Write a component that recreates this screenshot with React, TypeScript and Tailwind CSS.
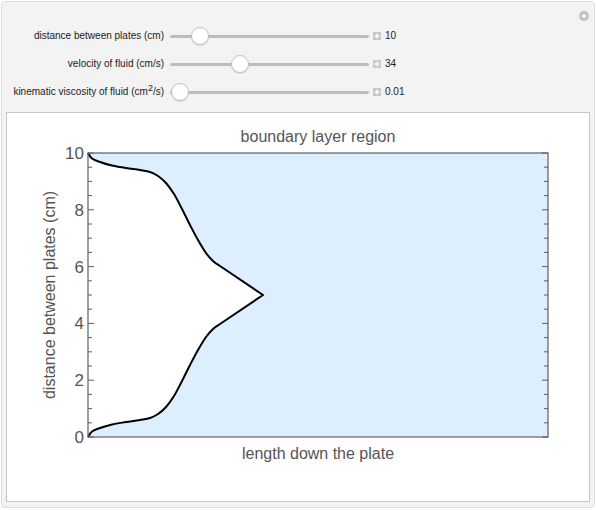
import React from "react";

type Pt = [number, number];

// catmull-rom through the points, turned into cubic beziers
function smooth(pts: Pt[]): string {
  let d = `M${pts[0][0]},${pts[0][1]}`;
  for (let i = 0; i < pts.length - 1; i++) {
    const p0 = pts[i - 1] || pts[i];
    const p1 = pts[i];
    const p2 = pts[i + 1];
    const p3 = pts[i + 2] || p2;
    const c1x = p1[0] + (p2[0] - p0[0]) / 6;
    const c1y = p1[1] + (p2[1] - p0[1]) / 6;
    const c2x = p2[0] - (p3[0] - p1[0]) / 6;
    const c2y = p2[1] - (p3[1] - p1[1]) / 6;
    d += ` C${c1x.toFixed(1)},${c1y.toFixed(1)} ${c2x.toFixed(1)},${c2y.toFixed(1)} ${p2[0]},${p2[1]}`;
  }
  return d;
}

// frame, in the svg's own coordinates
const X0 = 81;
const X1 = 541;
const Y0 = 40;
const Y1 = 324;
const UNIT = (Y1 - Y0) / 10;
const MID = (Y0 + Y1) / 2;

const TOP: Pt[] = [
  [0, 0],
  [4, 5.5],
  [12, 9],
  [24, 12.5],
  [38, 15],
  [52, 17],
  [62, 19],
  [70, 23],
  [78, 30],
  [86, 41],
  [94, 56],
  [102, 72],
  [110, 87],
  [118, 100],
  [125, 108],
  [132, 113],
];
const PEAK: Pt = [175, 142];

const topPts: Pt[] = TOP.map(([x, y]) => [X0 + x, Y0 + y]);
const botPts: Pt[] = TOP.map(([x, y]) => [X0 + x, Y1 - y]).reverse() as Pt[];
const peak: Pt = [X0 + PEAK[0], Y0 + PEAK[1]];

const curve = `${smooth(topPts)} L${peak[0]},${peak[1]} L${botPts[0][0]},${botPts[0][1]} ${smooth(botPts).replace(/^M[^ ]+/, "")}`;

const ticks: { y: number; major: boolean; label?: string }[] = [];
for (let i = 0; i <= 20; i++) {
  const v = i / 2;
  const major = i % 4 === 0;
  ticks.push({ y: Y1 - v * UNIT, major, label: major ? String(v) : undefined });
}

const CONTROLS = [
  { label: <>distance between plates (cm)</>, at: 30, value: "10" },
  { label: <>velocity of fluid (cm/s)</>, at: 70, value: "34" },
  {
    label: (
      <>
        kinematic viscosity of fluid (cm<span className="text-[9px] relative -top-[4px]">2</span>/s)
      </>
    ),
    at: 10,
    value: "0.01",
  },
];

function Slider({ at }: { at: number }) {
  return (
    <div className="relative w-[199px] h-[28px] flex items-center">
      <div className="w-full h-[3px] rounded-full bg-[#bdbdbd]" />
      <div
        className="absolute top-[5px] w-[18px] h-[18px] rounded-full bg-white border border-[#c2c2c2] shadow-[0_1px_1px_rgba(0,0,0,0.12)]"
        style={{ left: at - 9 }}
      />
    </div>
  );
}

function PlusBox() {
  return (
    <div className="w-[8px] h-[8px] bg-[#c8c8c8] flex items-center justify-center">
      <svg width="6" height="6" viewBox="0 0 6 6">
        <path d="M3 0.5v5M0.5 3h5" stroke="#fff" strokeWidth="1.3" />
      </svg>
    </div>
  );
}

export default function App() {
  const font = "'Liberation Sans', Arial, sans-serif";
  return (
    <div className="w-[596px] h-[510px] bg-white font-['Liberation_Sans',Arial,sans-serif]">
      <div className="relative w-[594px] h-[507px] ml-[1px] mt-[1px] border border-[#dddddd] rounded-[4px] bg-[#f3f3f3]">
        <div className="absolute right-[5px] top-[9px] w-[10px] h-[10px] rounded-full bg-[#bfbfbf] flex items-center justify-center">
          <svg width="6" height="6" viewBox="0 0 6 6">
            <path d="M3 0.5v5M0.5 3h5" stroke="#fff" strokeWidth="1.4" />
          </svg>
        </div>

        <div className="pt-[20px]">
          {CONTROLS.map((c, i) => (
            <div key={i} className="flex items-center h-[28px]">
              <div className="w-[162px] text-right text-[10px] text-[#222] whitespace-nowrap leading-none">
                {c.label}
              </div>
              <div className="ml-[6px]">
                <Slider at={c.at} />
              </div>
              <div className="ml-[4px]">
                <PlusBox />
              </div>
              <div className="ml-[4px] text-[10px] text-[#222] leading-none">{c.value}</div>
            </div>
          ))}
        </div>

        <div className="ml-[4px] mt-[6px] w-[584px] h-[390px] bg-white border border-[#c6c6c6]">
          <svg width="582" height="388" viewBox="0 0 582 388" fontFamily={font}>
            <rect x={X0} y={Y0} width={X1 - X0} height={Y1 - Y0} fill="#ddeeff" />
            <path d={`${curve} Z`} fill="#ffffff" />
            <path d={curve} fill="none" stroke="#000" strokeWidth="2" strokeLinejoin="round" />
            <rect x={X0} y={Y0} width={X1 - X0} height={Y1 - Y0} fill="none" stroke="#5f5f5f" strokeWidth="1.2" />
            {ticks.map((t, i) => (
              <g key={i}>
                <line x1={X0} x2={X0 + (t.major ? 6 : 4)} y1={t.y} y2={t.y} stroke="#5f5f5f" strokeWidth="1" />
                <line x1={X1} x2={X1 - (t.major ? 6 : 4)} y1={t.y} y2={t.y} stroke="#5f5f5f" strokeWidth="1" />
                {t.label && (
                  <text x={X0 - 4} y={t.y + 6} textAnchor="end" fontSize="17" fill="#555">
                    {t.label}
                  </text>
                )}
              </g>
            ))}
            <text x={311} y={29} textAnchor="middle" fontSize="16" fill="#555">
              boundary layer region
            </text>
            <text x={311} y={346} textAnchor="middle" fontSize="16" fill="#555">
              length down the plate
            </text>
            <text
              transform={`translate(48, ${MID}) rotate(-90)`}
              textAnchor="middle"
              fontSize="16"
              fill="#555"
            >
              distance between plates (cm)
            </text>
          </svg>
        </div>
      </div>
    </div>
  );
}
